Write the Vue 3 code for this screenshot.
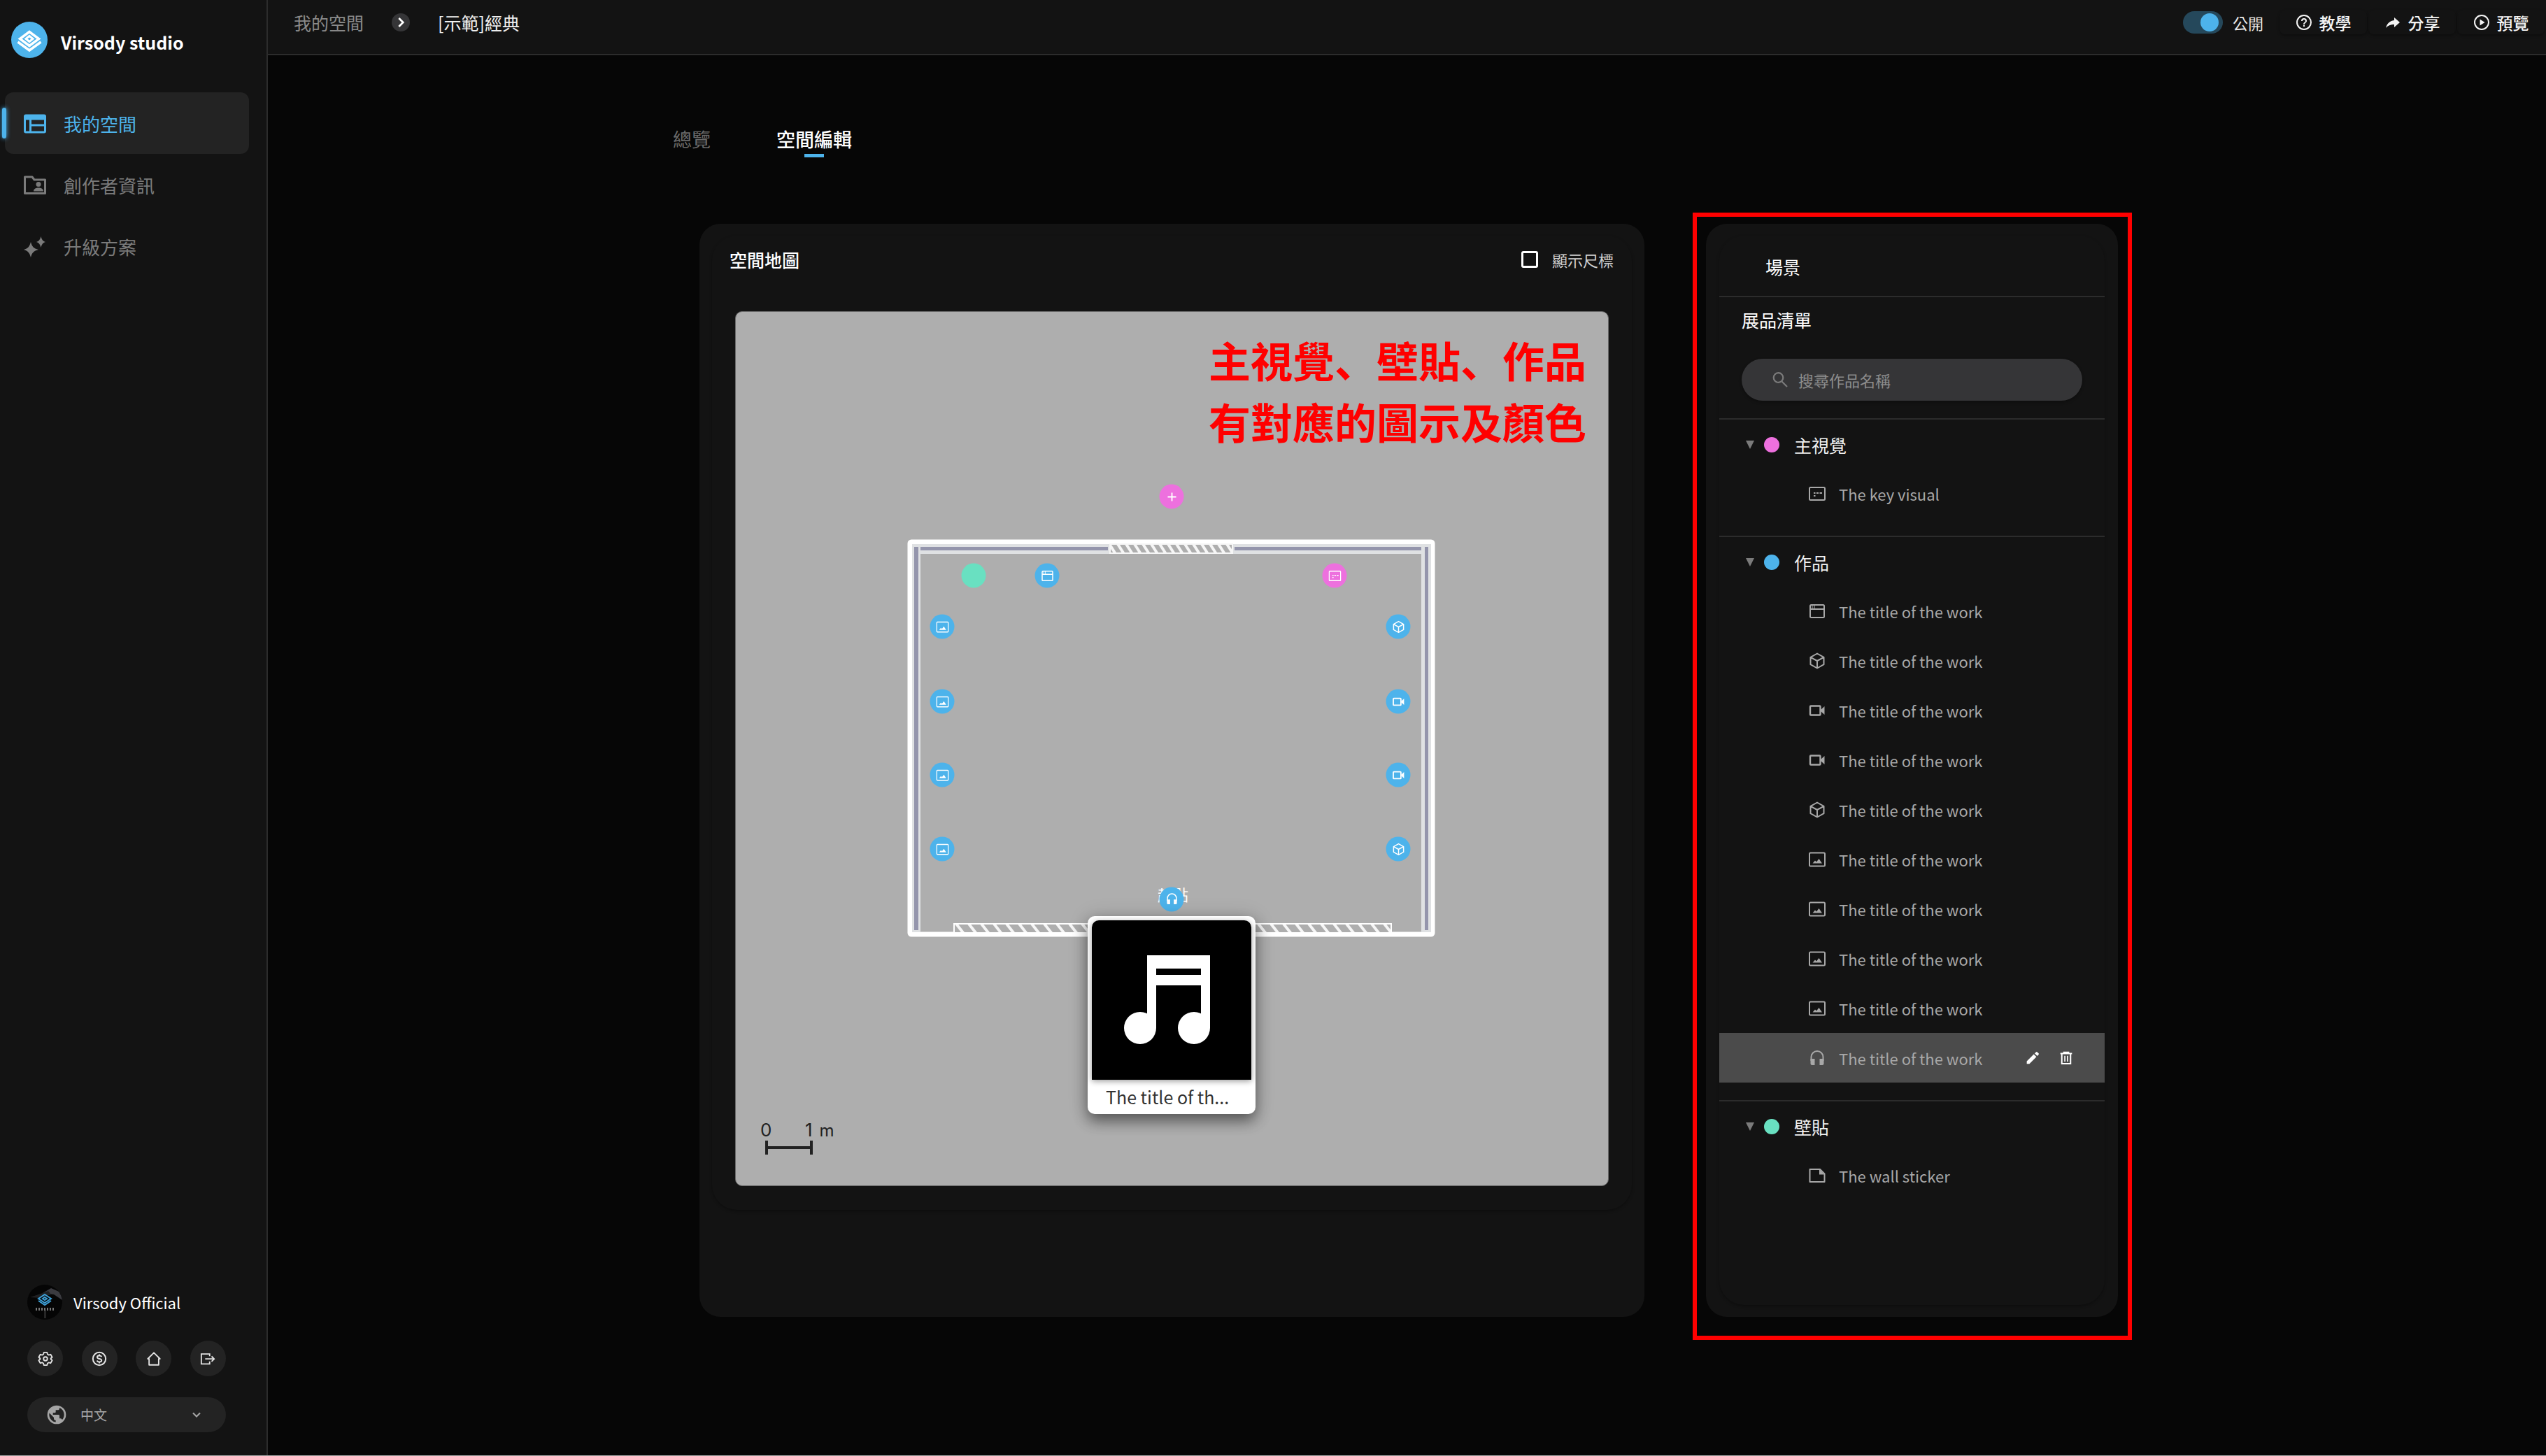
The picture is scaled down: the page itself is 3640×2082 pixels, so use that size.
<script setup>
import { h, ref } from 'vue'

const icons = {
  logo: ['0 0 52 52', '<g fill="none" stroke="currentColor" stroke-width="3.500"><path d="M26 14.500 12.500 24.500 26 34.500 39.500 24.500Z"/><path d="M26 20.500 21 24.500 26 28.500 31 24.500Z" stroke-width="3"/><path d="M9.500 29 26 41 42.500 29"/></g>'],
  table: ['0 0 32 27', '<path fill="currentColor" fill-rule="evenodd" d="M3 0H29A3 3 0 0 1 32 3V24A3 3 0 0 1 29 27H3A3 3 0 0 1 0 24V3A3 3 0 0 1 3 0ZM3 8V24H8V8ZM11 8V14H29V8ZM11 17V24H29V17Z"/>'],
  folder: ['0 0 32 27', '<path fill="none" stroke="currentColor" stroke-width="3" stroke-linejoin="round" d="M1.500 1.500H12L15 5.500H30.500V25H1.500Z"/><circle cx="21" cy="12" r="3.500" fill="currentColor"/><path fill="currentColor" d="M14 22C14 18 18 17 21 17S28 18 28 22Z"/>'],
  sparkle: ['0 0 32 30', '<path fill="currentColor" d="M10 8C12 15 14 17 21 19C14 21 12 23 10 30C8 23 6 21 0 19C6 17 8 15 10 8ZM24.500 0C26 5 27 6.500 31 8C27 9.500 26 11 24.500 16C23 11 22 9.500 18 8C22 6.500 23 5 24.500 0Z"/>'],
  chevron: ['0 0 24 24', '<path fill="none" stroke="currentColor" stroke-width="2.500" d="M9.500 6.500 15 12 9.500 17.500"/>'],
  down: ['0 0 24 24', '<path fill="none" stroke="currentColor" stroke-width="2.500" d="M6 9 12 15 18 9"/>'],
  help: ['0 0 24 24', '<circle cx="12" cy="12" r="10" fill="none" stroke="currentColor" stroke-width="2"/><path fill="currentColor" d="M11 18H13V16H11ZM12 6A4 4 0 0 0 8 10H10A2 2 0 1 1 14 10C14 12 11 11.750 11 15H13C13 12.750 16 12.500 16 10A4 4 0 0 0 12 6Z"/>'],
  share: ['0 0 24 24', '<path fill="currentColor" d="M14 5V9C7 10 3.500 14.500 2 20C5 16.500 8.500 15 14 15V19L22 12Z"/>'],
  play: ['0 0 24 24', '<circle cx="12" cy="12" r="10" fill="none" stroke="currentColor" stroke-width="2"/><path fill="currentColor" d="M9.500 7.500 16.500 12 9.500 16.500Z"/>'],
  gear: ['0 0 24 24', '<path fill="none" stroke="currentColor" stroke-width="2" stroke-linejoin="round" d="M9.500 2H14.500L15.200 5 17 6.100 20 5.200 22.500 9.500 20.300 11.500V12.500L22.500 14.500 20 18.800 17 17.900 15.200 19 14.500 22H9.500L8.800 19 7 17.900 4 18.800 1.500 14.500 3.700 12.500V11.500L1.500 9.500 4 5.200 7 6.100 8.800 5Z"/><circle cx="12" cy="12" r="3" fill="none" stroke="currentColor" stroke-width="2"/>'],
  coin: ['0 0 24 24', '<circle cx="12" cy="12" r="10" fill="none" stroke="currentColor" stroke-width="2.200"/><path fill="none" stroke="currentColor" stroke-width="2.200" d="M15.500 9C15 7.500 13.500 7 12 7C10 7 8.700 8 8.700 9.500C8.700 13 15.500 11 15.500 14.500C15.500 16 14 17 12 17C10 17 8.800 16 8.500 14.800M12 5V7M12 17V19"/>'],
  home: ['0 0 24 24', '<path fill="none" stroke="currentColor" stroke-width="2" stroke-linejoin="round" d="M2.500 12 12 2.500 21.500 12H19.500V21.500H4.500V12Z"/>'],
  logout: ['0 0 24 24', '<path fill="none" stroke="currentColor" stroke-width="2" d="M15 8V4.500H2V20H15V16M8 12.200H22M18 8.200 22 12.200 18 16.200"/>'],
  globe: ['0 0 24 24', '<path fill="currentColor" d="M17.900 17.390C17.640 16.590 16.890 16 16 16H15V13A1 1 0 0 0 14 12H8V10H10A1 1 0 0 0 11 9V7H13A2 2 0 0 0 15 5V4.590C17.930 5.770 20 8.640 20 12C20 14.080 19.200 15.970 17.900 17.390M11 19.930C7.050 19.440 4 16.080 4 12C4 11.380 4.080 10.780 4.210 10.210L9 15V16A2 2 0 0 0 11 18M12 2A10 10 0 0 0 2 12A10 10 0 0 0 12 22A10 10 0 0 0 22 12A10 10 0 0 0 12 2Z"/>'],
  search: ['0 0 24 24', '<path fill="none" stroke="currentColor" stroke-width="2.200" d="M14.500 14.500 22 22"/><circle cx="9.500" cy="9" r="6.800" fill="none" stroke="currentColor" stroke-width="2.200"/>'],
  visual: ['0 0 24 24', '<rect x="1" y="3" width="22" height="18" rx="1.500" fill="none" stroke="currentColor" stroke-width="2"/><path fill="currentColor" d="M7 10H9.500V12H7ZM11 10H14V12H11ZM15.500 10H19V12H15.500ZM7 14H9.500V16H7Z"/>'],
  web: ['0 0 24 24', '<rect x="2" y="3" width="20" height="18" rx="1.500" fill="none" stroke="currentColor" stroke-width="2"/><path fill="none" stroke="currentColor" stroke-width="2" d="M2 9H22"/><path stroke="currentColor" stroke-width="1" d="M5 3V9M8 3V9"/>'],
  cube: ['0 0 24 24', '<path fill="none" stroke="currentColor" stroke-width="2" stroke-linejoin="round" d="M12 1.500 21.500 6.800V17.200L12 22.500 2.500 17.200V6.800ZM2.500 6.800 12 12 21.500 6.800M12 12V22.500"/>'],
  video: ['0 0 24 24', '<rect x="2" y="5.500" width="14.500" height="13" rx="1" fill="none" stroke="currentColor" stroke-width="2.400"/><path fill="currentColor" d="M17 11 22.500 6V18L17 13Z"/>'],
  image: ['0 0 24 24', '<rect x="1" y="2.500" width="22" height="19" rx="1.500" fill="none" stroke="currentColor" stroke-width="2"/><path fill="currentColor" d="M5.500 17.500 9 13.500 11 15.500 14.500 11 19 17.500Z"/>'],
  audio: ['0 0 24 24', '<path fill="none" stroke="currentColor" stroke-width="2" d="M3.500 16V10.500A8.500 8.500 0 0 1 20.500 10.500V16"/><path fill="currentColor" d="M2.500 13H8.500V22H4.500A2 2 0 0 1 2.500 20ZM15.500 13H21.500V20A2 2 0 0 1 19.500 22H15.500Z"/>'],
  sticker: ['0 0 24 24', '<path fill="none" stroke="currentColor" stroke-width="2" stroke-linejoin="round" d="M1.500 3H16L22.500 9.500V21H1.500Z"/><path fill="currentColor" d="M15 3 22.500 10.500H15Z"/>'],
  pencil: ['0 0 24 24', '<path fill="currentColor" d="M2 17.500 14 5.500 18.500 10 6.500 22H2ZM15.500 4 18 1.700A1.500 1.500 0 0 1 20 1.700L22.300 4A1.500 1.500 0 0 1 22.300 6L20 8.500Z"/>'],
  trash: ['0 0 24 24', '<path fill="none" stroke="currentColor" stroke-width="2.400" d="M2 4.200H22M8 4V2.200H16V4M4.500 4.500V21.500H19.500V4.500"/><path stroke="currentColor" stroke-width="2" d="M9.700 8V18M14.300 8V18"/>'],
  plus: ['0 0 24 24', '<path stroke="currentColor" stroke-width="2.500" d="M12 4V20M4 12H20"/>']
}

const Icon = ({ name }) =>
  h('svg', { class: 'icon', viewBox: icons[name][0], 'aria-hidden': 'true', innerHTML: icons[name][1] })
Icon.props = ['name']

const nav = [
  { label: '我的空間', icon: 'table', active: true },
  { label: '創作者資訊', icon: 'folder' },
  { label: '升級方案', icon: 'sparkle' }
]
const tools = [
  { icon: 'gear', label: '設定' },
  { icon: 'coin', label: '方案' },
  { icon: 'home', label: '首頁' },
  { icon: 'logout', label: '登出' }
]
const actions = [
  { icon: 'help', label: '教學' },
  { icon: 'share', label: '分享' },
  { icon: 'play', label: '預覽' }
]

const work = 'The title of the work'
const shorten = (text, max) => (text.length > max ? `${text.slice(0, max)}...` : text)
const groups = [
  { name: '主視覺', color: 'pink', items: [{ icon: 'visual', title: 'The key visual' }] },
  {
    name: '作品',
    color: 'blue',
    items: ['web', 'cube', 'video', 'video', 'cube', 'image', 'image', 'image', 'image', 'audio'].map(
      (icon) => ({ icon, title: work, selected: icon === 'audio' })
    )
  },
  { name: '壁貼', color: 'green', items: [{ icon: 'sticker', title: 'The wall sticker' }] }
]

// Floor plan units
const plan = { width: 1247, height: 1249 }
const pins = [
  { x: 623, y: 264, color: 'pink', icon: 'plus' },
  { x: 340, y: 377, color: 'green' },
  { x: 445, y: 377, color: 'blue', icon: 'web' },
  { x: 856, y: 377, color: 'pink', icon: 'visual' },
  { x: 295, y: 450, color: 'blue', icon: 'image' },
  { x: 295, y: 557, color: 'blue', icon: 'image' },
  { x: 295, y: 662, color: 'blue', icon: 'image' },
  { x: 295, y: 768, color: 'blue', icon: 'image' },
  { x: 947, y: 450, color: 'blue', icon: 'cube' },
  { x: 947, y: 557, color: 'blue', icon: 'video' },
  { x: 947, y: 662, color: 'blue', icon: 'video' },
  { x: 947, y: 768, color: 'blue', icon: 'cube' },
  { x: 623, y: 840, color: 'blue', icon: 'audio' }
]
const at = (x, y) => ({ left: `${(x / plan.width) * 100}%`, top: `${(y / plan.height) * 100}%` })

const isPublic = ref(true)
const showRuler = ref(false)
const keyword = ref('')
const lang = ref('zh')
</script>

<template>
  <div class="page">
    <aside class="sidebar">
      <div class="brand">
        <span class="brand-logo"><Icon name="logo" /></span>
        <span class="brand-name">Virsody studio</span>
      </div>
      <nav class="nav">
        <a v-for="n in nav" :key="n.label" href="#" class="nav-item" :class="{ active: n.active }">
          <Icon :name="n.icon" />
          <span>{{ n.label }}</span>
        </a>
      </nav>
      <div class="side-foot">
        <div class="account">
          <svg class="avatar" viewBox="0 0 50 50" aria-hidden="true">
            <defs>
              <clipPath id="avatar-clip"><circle cx="25" cy="25" r="25" /></clipPath>
            </defs>
            <g clip-path="url(#avatar-clip)">
              <rect width="50" height="50" fill="#050505" />
              <path d="M22 12 34 5 50 12V22L38 14Z" fill="#3b3b40" />
              <path d="M4 18 22 12 30 9 34 14 18 19Z" fill="#202022" />
              <path d="M24 36H27V48H24Z" fill="#262626" />
              <g fill="none" stroke="#3d9fd6" stroke-width="2">
                <path d="M25 14 34 20 25 26 16 20Z" />
                <path d="M25 18 28 20 25 22 22 20Z" />
                <path d="M16 23 25 29 34 23" />
              </g>
              <path d="M12 35H38" stroke="#777" stroke-width="4" stroke-dasharray="2 2" />
            </g>
          </svg>
          <span>Virsody Official</span>
        </div>
        <div class="tools">
          <button v-for="t in tools" :key="t.icon" type="button" class="tool" :aria-label="t.label">
            <Icon :name="t.icon" />
          </button>
        </div>
        <div class="language">
          <Icon name="globe" />
          <select v-model="lang" aria-label="語言">
            <option value="zh">中文</option>
          </select>
          <Icon name="down" />
        </div>
      </div>
    </aside>

    <div class="body">
      <header class="topbar">
        <div class="crumbs">
          <a href="#">我的空間</a>
          <span class="crumb-sep"><Icon name="chevron" /></span>
          <span class="crumb-current">[示範]經典</span>
        </div>
        <div class="actions">
          <label class="public">
            <input v-model="isPublic" type="checkbox" role="switch" class="switch" />
            <span>公開</span>
          </label>
          <button v-for="a in actions" :key="a.icon" type="button" class="action">
            <Icon :name="a.icon" />
            <span>{{ a.label }}</span>
          </button>
        </div>
      </header>

      <main class="main">
        <nav class="tabs">
          <a href="#" class="tab">總覽</a>
          <a href="#" class="tab current">空間編輯</a>
        </nav>

        <div class="columns">
          <section class="card map-card">
            <div class="sheet map-sheet">
              <div class="map-head">
                <h2>空間地圖</h2>
                <label class="ruler">
                  <input v-model="showRuler" type="checkbox" />
                  <span>顯示尺標</span>
                </label>
              </div>
              <div class="map">
                <svg class="plan" viewBox="0 0 1247 1249" aria-hidden="true">
                  <defs>
                    <pattern id="hatch-sm" width="12" height="12" x="536" y="333" patternUnits="userSpaceOnUse">
                      <path d="M-2 -1 7 13M10 -1 19 13" stroke="#f6f6f6" stroke-width="4" />
                    </pattern>
                    <pattern id="hatch-lg" width="18" height="12" x="313" y="876" patternUnits="userSpaceOnUse">
                      <path d="M2 -1 13 13M-16 -1 -5 13M20 -1 31 13" stroke="#f6f6f6" stroke-width="4" />
                    </pattern>
                  </defs>
                  <rect x="249" y="329" width="747" height="561" rx="2" fill="none" stroke="#fff" stroke-width="7" />
                  <g fill="#dfe1e3">
                    <path d="M252 332H264V887H252ZM980 332H994V887H980Z" />
                    <path d="M252 332H534V346H252ZM710 332H990V346H710Z" />
                  </g>
                  <g fill="#9495ac">
                    <path d="M255 336H261V884H255ZM985 336H990V884H985Z" />
                    <path d="M264 336H532V341H264ZM713 336H980V341H713Z" />
                  </g>
                  <rect x="535" y="332" width="175" height="13" fill="#aeaeae" stroke="#f6f6f6" stroke-width="2" />
                  <rect x="536" y="333" width="173" height="11" fill="url(#hatch-sm)" />
                  <rect x="312" y="875" width="625" height="13" fill="#aeaeae" stroke="#fff" stroke-width="2" />
                  <rect x="313" y="876" width="623" height="11" fill="url(#hatch-lg)" />
                </svg>

                <p class="callout">主視覺、壁貼、作品<br />有對應的圖示及顏色</p>

                <span class="start" :style="at(625, 832)">起點</span>
                <button
                  v-for="(p, i) in pins"
                  :key="i"
                  type="button"
                  class="pin"
                  :class="p.color"
                  :style="at(p.x, p.y)"
                  aria-label="展品"
                >
                  <Icon v-if="p.icon" :name="p.icon" />
                </button>

                <figure class="preview" :style="at(623, 864)">
                  <svg viewBox="0 0 228 228" aria-hidden="true">
                    <rect width="228" height="228" />
                    <g fill="#fff">
                      <path fill-rule="evenodd" d="M79 50H169V154H156V93H92V154H79ZM92 69V78H156V69Z" />
                      <circle cx="69" cy="154" r="23" />
                      <circle cx="146" cy="154" r="23" />
                    </g>
                  </svg>
                  <figcaption>{{ shorten(work, 15) }}</figcaption>
                </figure>

                <div class="scale">
                  <div class="scale-labels"><span>0</span><span>1</span><span class="unit">m</span></div>
                  <svg viewBox="0 0 68 20" aria-hidden="true">
                    <path d="M2 0V20M66 0V20M2 10H66" stroke="#222" stroke-width="4" />
                  </svg>
                </div>
              </div>
            </div>
          </section>

          <section class="card list-card">
            <div class="sheet">
              <h2 class="scene">場景</h2>
              <div class="finder">
                <h3>展品清單</h3>
                <label class="search">
                  <Icon name="search" />
                  <input v-model="keyword" type="search" placeholder="搜尋作品名稱" aria-label="搜尋作品名稱" />
                </label>
              </div>
              <div v-for="g in groups" :key="g.name" class="group">
                <button type="button" class="group-head">
                  <span class="caret"></span>
                  <span class="dot" :class="g.color"></span>
                  <span>{{ g.name }}</span>
                </button>
                <ul>
                  <li v-for="(it, i) in g.items" :key="i" :class="{ selected: it.selected }">
                    <Icon :name="it.icon" />
                    <span class="title">{{ it.title }}</span>
                    <template v-if="it.selected">
                      <button type="button" class="row-btn" aria-label="編輯"><Icon name="pencil" /></button>
                      <button type="button" class="row-btn" aria-label="刪除"><Icon name="trash" /></button>
                    </template>
                  </li>
                </ul>
              </div>
            </div>
          </section>
        </div>
      </main>
    </div>
  </div>
</template>

<style>
body {
  margin: 0;
  background: #060606;
}
</style>

<style scoped>
.page {
  display: flex;
  min-height: 100vh;
  box-sizing: border-box;
  border-bottom: 1px solid #a6a6a6;
  background: #060606;
  color: #fff;
  font-family: "Noto Sans CJK TC", "Noto Sans", sans-serif;
  font-size: 25px;
  line-height: 36px;
}
h2, h3, p, ul, figure {
  margin: 0;
  padding: 0;
  font-size: inherit;
  font-weight: 400;
}
a {
  color: inherit;
  text-decoration: none;
}
button, input, select {
  margin: 0;
  padding: 0;
  border: 0;
  background: none;
  color: inherit;
  font: inherit;
}
.icon {
  display: block;
  flex: none;
  width: 24px;
  height: 24px;
}

/* Sidebar */
.sidebar {
  display: flex;
  flex: none;
  flex-direction: column;
  box-sizing: border-box;
  width: 383px;
  border-right: 2px solid #2c2c2c;
  background: #131313;
}
.brand {
  display: flex;
  align-items: center;
  gap: 19px;
  padding: 31px 16px 0;
}
.brand-logo {
  border-radius: 50%;
  background: #4db3eb;
}
.brand-logo .icon {
  width: 52px;
  height: 52px;
}
.brand-name {
  padding-top: 5px;
  font-weight: 700;
}
.nav {
  padding: 49px 25px 0 7px;
}
.nav-item {
  position: relative;
  display: flex;
  align-items: center;
  gap: 25px;
  box-sizing: border-box;
  height: 88px;
  padding: 2px 0 0 27px;
  border-radius: 12px;
  color: #7b7b7b;
  font-size: 26px;
}
.nav-item .icon {
  width: 32px;
  height: 30px;
}
.nav-item.active {
  background: #232323;
  color: #4db3eb;
}
.nav-item.active::before {
  content: "";
  position: absolute;
  top: 22px;
  left: -4px;
  width: 6px;
  height: 44px;
  border-radius: 3px;
  background: #4db3eb;
  box-shadow: 0 0 6px #4db3eb;
}
.side-foot {
  margin-top: auto;
  padding: 0 58px 33px 39px;
}
.account {
  display: flex;
  align-items: center;
  gap: 16px;
  font-size: 22px;
}
.avatar {
  width: 50px;
  height: 50px;
}
.tools {
  display: flex;
  justify-content: space-between;
  margin: 30px 0;
}
.tool {
  display: grid;
  place-items: center;
  width: 51px;
  height: 51px;
  border-radius: 50%;
  background: #232323;
  color: #e4e4e4;
}
.tool .icon {
  width: 22px;
  height: 22px;
}
.language {
  display: flex;
  align-items: center;
  height: 50px;
  padding: 0 32px 0 26px;
  border-radius: 25px;
  background: #232323;
  color: #a5a5a5;
  font-size: 19px;
}
.language .icon:first-child {
  width: 32px;
  height: 32px;
}
.language .icon:last-child {
  width: 20px;
  height: 20px;
}
.language select {
  flex: 1;
  min-width: 0;
  margin-left: 18px;
  appearance: none;
}

/* Top bar */
.body {
  display: flex;
  flex: 1;
  flex-direction: column;
  min-width: 0;
}
.topbar {
  display: flex;
  justify-content: space-between;
  box-sizing: border-box;
  height: 79px;
  padding: 0 0 14px 37px;
  border-bottom: 2px solid #2c2c2c;
  background: #131313;
}
.crumbs {
  display: flex;
  align-items: center;
  gap: 40px;
  color: #8a8a8a;
}
.crumb-sep {
  border-radius: 50%;
  background: #353537;
  color: #fff;
}
.crumb-sep .icon {
  width: 26px;
  height: 26px;
}
.crumb-current {
  color: #f0f0f0;
}
.actions {
  display: flex;
  align-items: center;
}
.public {
  display: flex;
  align-items: center;
  gap: 14px;
  margin-right: 23px;
  font-size: 22px;
  color: #e6e6e6;
}
.switch {
  display: flex;
  align-items: center;
  box-sizing: border-box;
  width: 57px;
  height: 32px;
  padding: 0 6px;
  border-radius: 16px;
  background: #444;
  appearance: none;
}
.switch::before {
  content: "";
  width: 26px;
  height: 26px;
  border-radius: 50%;
  background: #aaa;
}
.switch:checked {
  justify-content: flex-end;
  background: #25485b;
}
.switch:checked::before {
  background: #4db3eb;
}
.action {
  display: flex;
  align-items: center;
  justify-content: center;
  gap: 10px;
  width: 125px;
  height: 34px;
  margin-right: 2px;
  border-radius: 8px;
  box-shadow: 0 2px 4px rgba(0, 0, 0, 0.3);
  font-size: 23px;
  font-weight: 500;
  color: #f4f4f4;
}

/* Work area */
.main {
  display: flex;
  flex: 1;
  flex-direction: column;
  box-sizing: border-box;
  width: 100%;
  max-width: 2103px;
  margin: 0 auto;
  padding: 102px 0 198px;
}
.tabs {
  display: flex;
  gap: 94px;
  padding-left: 2px;
  font-size: 27px;
}
.tab {
  display: flex;
  flex-direction: column;
  align-items: center;
  height: 139px;
  color: #6a6a6a;
}
.tab.current {
  color: #fff;
  font-weight: 500;
}
.tab.current::after {
  content: "";
  width: 28px;
  height: 5px;
  margin-top: 3px;
  background: #4db3eb;
}
.columns {
  display: grid;
  flex: 1;
  grid-template-columns: minmax(0, 1fr) 589px;
  gap: 88px;
  padding: 0 35px 0 40px;
}
.card {
  display: flex;
  flex-direction: column;
  padding: 17px 18px;
  border-radius: 30px;
  background: #131313;
}
.sheet {
  border-radius: 36px;
  box-shadow: 0 2px 4px rgba(0, 0, 0, 0.3);
}

/* Floor plan */
.map-sheet {
  padding: 0 33px 34px;
}
.map-head {
  display: flex;
  align-items: center;
  justify-content: space-between;
  margin: 0 -7px 0 -8px;
  padding: 16px 0 56px;
}
.map-head h2 {
  font-weight: 500;
}
.ruler {
  display: flex;
  align-items: center;
  gap: 20px;
  font-size: 22px;
  color: #d0d0d0;
}
.ruler input {
  box-sizing: border-box;
  width: 24px;
  height: 24px;
  border: 3px solid #fff;
  border-radius: 3px;
  appearance: none;
}
.ruler input:checked {
  background: #4db3eb;
}
.map {
  position: relative;
  box-sizing: border-box;
  aspect-ratio: 1249 / 1251;
  border: 1px solid #6b6b6b;
  border-radius: 10px;
  background: #aeaeae;
}
.plan {
  display: block;
  width: 100%;
  height: 100%;
}
.callout {
  position: absolute;
  top: 24px;
  right: 31px;
  color: #f00;
  font-family: "Noto Sans CJK SC", "Noto Sans CJK TC", sans-serif;
  font-size: 60px;
  font-weight: 700;
  line-height: 88px;
}
.start {
  position: absolute;
  transform: translate(-50%, -50%);
  font-size: 22px;
  white-space: nowrap;
}
.pin {
  position: absolute;
  display: grid;
  place-items: center;
  width: 35px;
  height: 35px;
  border-radius: 50%;
  transform: translate(-50%, -50%);
}
.pin .icon {
  width: 18px;
  height: 18px;
}
.pink {
  background: #ed70de;
}
.blue {
  background: #4db3eb;
}
.green {
  background: #69e0c1;
}
.preview {
  position: absolute;
  box-sizing: border-box;
  width: 240px;
  padding: 6px;
  border-radius: 10px;
  background: #fff;
  box-shadow: 0 10px 20px rgba(0, 0, 0, 0.45), 0 2px 30px rgba(0, 0, 0, 0.15);
  transform: translateX(-50%);
}
.preview svg {
  display: block;
  width: 100%;
  border-radius: 10px 10px 0 0;
  box-shadow: 0 2px 8px rgba(0, 0, 0, 0.4);
}
.preview figcaption {
  padding: 6px 20px 1px;
  color: #333;
  white-space: nowrap;
}
.scale {
  position: absolute;
  bottom: 44px;
  left: 35px;
  color: #222;
  font-family: Inter, sans-serif;
  font-size: 26px;
  line-height: 28px;
}
.scale-labels {
  display: flex;
  align-items: baseline;
}
.scale-labels span:first-child {
  width: 64px;
}
.scale-labels .unit {
  margin-left: 10px;
  font-size: 24px;
}
.scale svg {
  display: block;
  width: 68px;
  height: 20px;
  margin-left: 7px;
}

/* Exhibit list */
.list-card {
  position: relative;
  padding: 17px 19px;
}
.list-card::after {
  content: "";
  position: absolute;
  inset: -16px -20px -33px -19px;
  border: 6px solid #f00;
  pointer-events: none;
}
.list-card .sheet {
  flex: 1;
}
.scene {
  padding: 26px 66px 24px;
}
.finder {
  padding: 14px 32px 25px;
  border-top: 2px solid #2c2c2c;
}
.search {
  display: flex;
  align-items: center;
  gap: 14px;
  height: 60px;
  margin-top: 38px;
  padding: 0 43px;
  border-radius: 30px;
  background: #353537;
  box-shadow: 0 2px 4px rgba(0, 0, 0, 0.3);
  color: #7b7b7b;
  font-size: 22px;
}
.search input {
  flex: 1;
  min-width: 0;
  outline: none;
  appearance: none;
}
.search input::placeholder {
  color: #8c8c8c;
}
.group {
  padding-bottom: 25px;
  border-top: 2px solid #2c2c2c;
}
.group-head {
  display: flex;
  align-items: center;
  box-sizing: border-box;
  width: 100%;
  height: 70px;
  padding: 2px 0 0 38px;
  color: #f0f0f0;
  text-align: left;
}
.caret {
  border: 6px solid transparent;
  border-top: 12px solid #7b7b7b;
  border-bottom: 0;
}
.dot {
  width: 22px;
  height: 22px;
  margin: 0 21px 0 14px;
  border-radius: 50%;
}
.group li {
  display: flex;
  align-items: center;
  height: 71px;
  padding: 0 42px 0 128px;
  color: #a8a8a8;
  font-size: 22px;
  list-style: none;
}
.group li.selected {
  background: #4b4b4b;
}
.group .title {
  flex: 1;
  margin-left: 19px;
}
.row-btn {
  padding: 3px;
  margin-left: 22px;
  color: #fff;
}
.row-btn .icon {
  width: 20px;
  height: 20px;
}
</style>
